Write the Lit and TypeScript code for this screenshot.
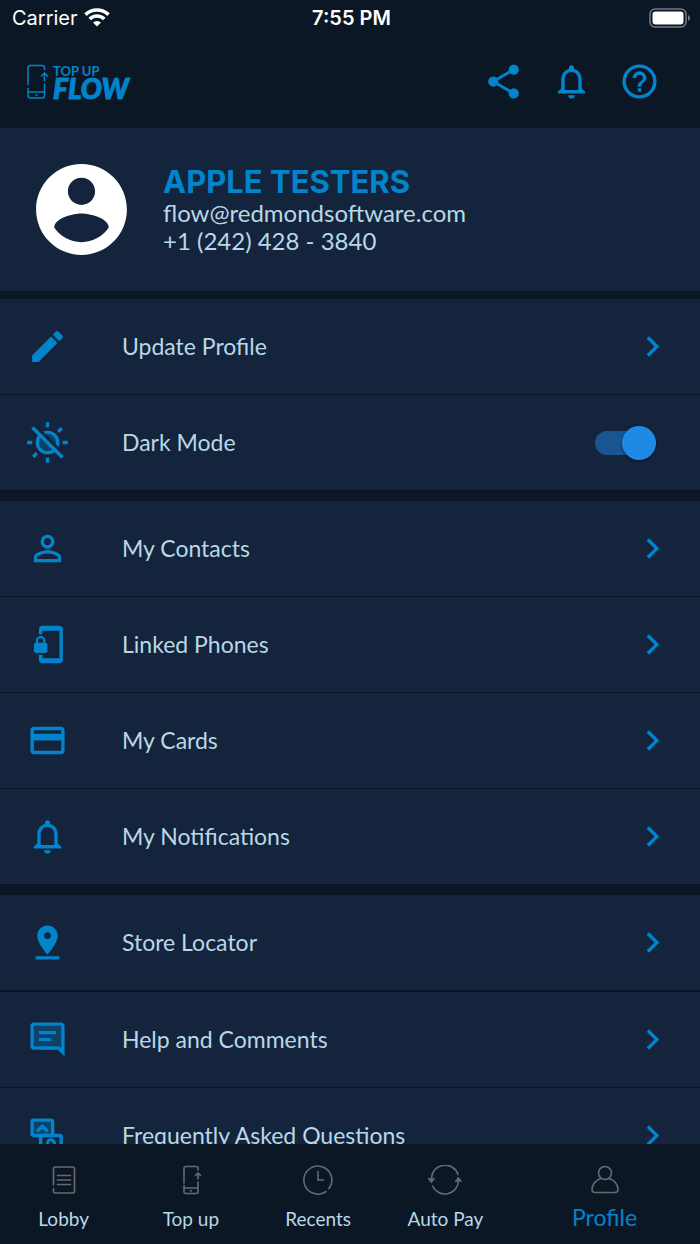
import { LitElement, html, css, svg } from "lit";
import { customElement, property, state } from "lit/decorators.js";

const icons = {
  share: svg`<g fill="currentColor"><circle cx="18" cy="5" r="3"/><circle cx="6" cy="12" r="3"/><circle cx="18" cy="19" r="3"/></g><path d="M18 5 6 12l12 7" fill="none" stroke="currentColor" stroke-width="1.7"/>`,
  bell: svg`<path fill="currentColor" d="M12 22c1.1 0 2-.9 2-2h-4c0 1.1.9 2 2 2zm6-6v-5c0-3.07-1.63-5.64-4.5-6.32V4c0-.83-.67-1.5-1.5-1.5s-1.5.67-1.5 1.5v.68C7.64 5.36 6 7.92 6 11v5l-2 2v1h16v-1l-2-2zm-2 1H8v-6c0-2.48 1.51-4.5 4-4.5s4 2.02 4 4.5v6z"/>`,
  help: svg`<path fill="currentColor" d="M11 18h2v-2h-2v2zm1-16C6.48 2 2 6.48 2 12s4.48 10 10 10 10-4.48 10-10S17.52 2 12 2zm0 18c-4.41 0-8-3.59-8-8s3.59-8 8-8 8 3.59 8 8-3.59 8-8 8zm0-14c-2.21 0-4 1.79-4 4h2c0-1.1.9-2 2-2s2 .9 2 2c0 2-3 1.75-3 5h2c0-2.25 3-2.5 3-5 0-2.21-1.79-4-4-4z"/>`,
  account: svg`<path fill="currentColor" d="M12 2C6.48 2 2 6.48 2 12s4.48 10 10 10 10-4.48 10-10S17.52 2 12 2zm0 3c1.66 0 3 1.34 3 3s-1.34 3-3 3-3-1.34-3-3 1.34-3 3-3zm0 14.2c-2.5 0-4.71-1.28-6-3.22.03-1.99 4-3.08 6-3.08 1.99 0 5.97 1.09 6 3.08-1.29 1.94-3.5 3.22-6 3.22z"/>`,
  edit: svg`<path fill="currentColor" d="M3 17.25V21h3.75L17.81 9.94l-3.75-3.75L3 17.25zM20.71 7.04c.39-.39.39-1.02 0-1.41l-2.34-2.34c-.39-.39-1.02-.39-1.41 0l-1.83 1.83 3.75 3.75 1.83-1.83z"/>`,
  sunOff: svg`<circle cx="12" cy="12" r="5" fill="currentColor" opacity=".3"/><circle cx="12" cy="12" r="6" fill="none" stroke="currentColor" stroke-width="1.9"/><path d="M12 .1v3M12 20.9v3M.1 12h3M20.9 12h3M18.3 5.7l2.1-2.1M3.6 20.4l2.1-2.1" fill="none" stroke="currentColor" stroke-width="2"/><path d="M5.2 2.6 21.4 18.8" stroke="#14243c" stroke-width="1.8"/><path d="M3.2 3.2 20.8 20.8" stroke="currentColor" stroke-width="2"/>`,
  person: svg`<path fill="currentColor" d="M12 5.9c1.16 0 2.1.94 2.1 2.1s-.94 2.1-2.1 2.1S9.9 9.16 9.9 8s.94-2.1 2.1-2.1m0 9c2.97 0 6.1 1.46 6.1 2.1v1.1H5.9V17c0-.64 3.13-2.1 6.1-2.1M12 4C9.79 4 8 5.79 8 8s1.79 4 4 4 4-1.79 4-4-1.79-4-4-4zm0 9c-2.67 0-8 1.34-8 4v3h16v-3c0-2.66-5.33-4-8-4z"/>`,
  phoneLock: svg`<path fill="currentColor" d="M19 1H9c-1.1 0-2 .9-2 2v3h2V4h10v16H9v-2H7v3c0 1.1.9 2 2 2h10c1.1 0 2-.9 2-2V3c0-1.1-.9-2-2-2zm-8.2 10V9.5C10.8 8.1 9.4 7 8 7S5.2 8.1 5.2 9.5V11c-.6 0-1.2.6-1.2 1.2v3.5c0 .7.6 1.3 1.2 1.3h5.5c.7 0 1.3-.6 1.3-1.2v-3.5c0-.7-.6-1.3-1.2-1.3zm-1.3 0h-3V9.5c0-.8.7-1.3 1.5-1.3s1.5.5 1.5 1.3V11z"/>`,
  card: svg`<path fill="currentColor" d="M20 4H4c-1.11 0-1.99.89-1.99 2L2 18c0 1.11.89 2 2 2h16c1.11 0 2-.89 2-2V6c0-1.11-.89-2-2-2zm0 14H4v-6h16v6zm0-10H4V6h16v2z"/>`,
  pin: svg`<path fill="currentColor" d="M18 8c0-3.31-2.69-6-6-6S6 4.69 6 8c0 4.5 6 11 6 11s6-6.5 6-11zm-8 0c0-1.1.9-2 2-2s2 .9 2 2-.89 2-2 2c-1.1 0-2-.9-2-2zM5 20v2h14v-2H5z"/>`,
  comment: svg`<path fill="currentColor" opacity=".3" d="M4 4h16v13.17L18.83 16H4z"/><path fill="currentColor" d="M20 17.17L18.83 16H4V4h16v13.17zM20 2H4c-1.1 0-2 .9-2 2v12c0 1.1.9 2 2 2h14l4 4V4c0-1.1-.9-2-2-2z"/><path d="M7 8h10M7 12h7" stroke="currentColor" stroke-width="1.9"/>`,
  faq: svg`<rect x="3" y="3" width="12" height="9" rx="1" fill="currentColor" fill-opacity=".3" stroke="currentColor" stroke-width="2"/><path d="M5.8 9.7 9 6.6l3.2 3.1" fill="none" stroke="currentColor" stroke-width="2"/><rect x="8" y="12" width="12" height="9" rx="1" fill="#14243c" stroke="currentColor" stroke-width="2"/><circle cx="14" cy="16.5" r="2" fill="none" stroke="currentColor" stroke-width="1.8"/>`,
  chevron: svg`<path fill="currentColor" d="M10 6L8.59 7.41 13.17 12l-4.58 4.59L10 18l6-6z"/>`,
};

// Thin-line glyphs of the tab bar, on a 36 x 30 grid.
const tabIcons = {
  lobby: svg`<path d="M7.500 20V3.500Q7.500 2 9 2h18q1.500 0 1.500 1.500v23q0 1.500-1.500 1.500H9q-1.500 0-1.500-1.500V23.500M11.500 10.500h13M11.500 15h13M11.500 19.500h13"/>`,
  topup: svg`<path d="M25 5V3q0-1.500-1.500-1.500h-11q-1.500 0-1.500 1.500v15M25 17v10q0 1.500-1.500 1.500h-11Q11 28.500 11 27v-6.500M11 23h14M25 14V8M22.500 10.500 25 8l2.500 2.500M17.500 25.800h1"/>`,
  recents: svg`<path d="M26 26.500A14 14 0 1 1 29 23.600M18 6.500V15h5.500"/>`,
  autopay: svg`<path d="M4.500 14.500A13.600 13.600 0 0 1 31 9.500M31.500 15.500A13.600 13.600 0 0 1 5.500 21"/><path fill="currentColor" stroke-width="1" d="M1.500 13.500q3 1.500 6 0l-3 4zM28.500 16.500q3-1.500 6 0l-3-4z"/>`,
  profile: svg`<circle cx="18" cy="8" r="6.500"/><path d="M14 13.500C8.500 15 5 19.500 5 24.500q0 3 3 3h20q3 0 3-3c0-5-3.500-9.500-9-11"/>`,
};

interface Item {
  label: string;
  icon: keyof typeof icons;
  toggle?: boolean;
}

const groups: Item[][] = [
  [
    { label: "Update Profile", icon: "edit" },
    { label: "Dark Mode", icon: "sunOff", toggle: true },
  ],
  [
    { label: "My Contacts", icon: "person" },
    { label: "Linked Phones", icon: "phoneLock" },
    { label: "My Cards", icon: "card" },
    { label: "My Notifications", icon: "bell" },
  ],
  [{ label: "Store Locator", icon: "pin" }],
  [
    { label: "Help and Comments", icon: "comment" },
    { label: "Frequently Asked Questions", icon: "faq" },
  ],
];

const tabs: { label: string; icon: keyof typeof tabIcons }[] = [
  { label: "Lobby", icon: "lobby" },
  { label: "Top up", icon: "topup" },
  { label: "Recents", icon: "recents" },
  { label: "Auto Pay", icon: "autopay" },
  { label: "Profile", icon: "profile" },
];

@customElement("app-icon")
export class AppIcon extends LitElement {
  @property() name: keyof typeof icons = "chevron";
  static styles = css`
    :host { display: block; width: 41px; height: 41px; flex: none; color: #0084cc; }
    .glyph { display: block; width: 100%; height: 100%; }
  `;
  render() {
    return html`<svg class="glyph" viewBox="0 0 24 24" aria-hidden="true">${icons[this.name]}</svg>`;
  }
}

@customElement("app-root")
export class AppRoot extends LitElement {
  @state() dark = true;

  static styles = css`
    :host {
      display: flex;
      flex-direction: column;
      height: 100vh;
      background: #0c1726;
      color: #b9d8e6;
      font-family: Lato, "Open Sans", sans-serif;
    }
    * { box-sizing: border-box; }
    a { color: inherit; text-decoration: none; }
    button { border: 0; padding: 0; background: none; cursor: pointer; }
    .status {
      display: grid;
      grid-template-columns: 1fr auto 1fr;
      align-items: center;
      height: 35px;
      padding: 0 9px 0 12px;
      color: #fff;
      font: 400 20px/24px Inter, sans-serif;
    }
    .carrier { display: flex; align-items: center; gap: 6px; }
    .time { font-weight: 600; }
    .wifi { width: 26px; height: 19px; }
    .battery { width: 42px; height: 20px; justify-self: end; }
    .header {
      display: flex;
      justify-content: space-between;
      align-items: center;
      height: 93px;
      padding: 0 40px 0 26px;
    }
    .logo { display: flex; align-items: center; gap: 4px; color: #0084cc; }
    .phone { width: 23px; height: 36px; }
    .brand { display: grid; }
    .top { font-size: 13px; line-height: 12px; font-weight: 700; }
    .flow {
      font-size: 28px;
      line-height: 22px;
      font-weight: 900;
      font-style: italic;
      -webkit-text-stroke: 1px currentColor;
    }
    .actions { display: flex; gap: 27px; }
    .content { flex: 1; min-height: 0; overflow-y: auto; scrollbar-width: none; }
    .profile {
      display: flex;
      align-items: center;
      gap: 27px;
      height: 163px;
      padding: 0 27px;
      margin-bottom: 8px;
      background: #14243c;
    }
    .avatar { width: 109px; height: 109px; color: #fff; }
    .name { margin: 0; color: #0084cc; font: 700 31px/34px Inter, sans-serif; }
    .line { margin: 0; font-size: 24px; line-height: 28px; }
    .group { list-style: none; margin: 0 0 10px; padding: 0; }
    .group.tight { margin-bottom: 1px; }
    .row {
      display: flex;
      align-items: center;
      height: 96px;
      padding: 0 27px;
      gap: 54px;
      background: #14243c;
      border-bottom: 1px solid #0b1423;
      font-size: 23px;
      line-height: 28px;
    }
    .text { flex: 1; padding-bottom: 2px; }
    .switch {
      appearance: none;
      display: flex;
      align-items: center;
      justify-content: flex-start;
      width: 61px;
      height: 24px;
      margin: 0 17px 0 0;
      border-radius: 12px;
      background: #26364c;
      cursor: pointer;
    }
    .switch:checked { justify-content: flex-end; background: #1a5591; }
    .switch::before {
      content: "";
      width: 34px;
      height: 34px;
      border-radius: 50%;
      background: #1f8ae6;
      box-shadow: 0 1px 3px rgba(0, 0, 0, 0.5);
    }
    .tabs {
      display: grid;
      grid-template-columns: repeat(4, 2fr) 3fr;
      height: 100px;
      flex: none;
      background: #0c1726;
    }
    .tab {
      display: flex;
      flex-direction: column;
      align-items: center;
      padding-top: 21px;
      gap: 12px;
      font-size: 19px;
      line-height: 24px;
    }
    .tab.current { color: #0084cc; font-size: 23px; gap: 10px; }
    .tabicon {
      width: 36px;
      height: 30px;
      fill: none;
      stroke: #69696e;
      color: #69696e;
      stroke-width: 1.6;
      stroke-linecap: round;
    }
  `;

  private row(item: Item) {
    if (item.toggle) {
      return html`<li><label class="row">
        <app-icon name=${item.icon}></app-icon>
        <span class="text">${item.label}</span>
        <input class="switch" type="checkbox" role="switch" .checked=${this.dark}
          @change=${(e: Event) => (this.dark = (e.target as HTMLInputElement).checked)} />
      </label></li>`;
    }
    return html`<li><a class="row" href="#">
      <app-icon name=${item.icon}></app-icon>
      <span class="text">${item.label}</span>
      <app-icon name="chevron"></app-icon>
    </a></li>`;
  }

  render() {
    return html`
      <div class="status">
        <span class="carrier">Carrier
          <svg class="wifi" viewBox="0 0 26 19" aria-hidden="true">
            <g fill="none" stroke="#fff" stroke-width="3.6">
              <path d="M1.500 6.600a16.500 16.500 0 0 1 23 0"/>
              <path d="M5.700 11a10.400 10.400 0 0 1 14.600 0"/>
            </g>
            <path fill="#fff" d="M13 18.500 9 14.600a5.700 5.700 0 0 1 8 0z"/>
          </svg>
        </span>
        <span class="time">7:55 PM</span>
        <svg class="battery" viewBox="0 0 42 20" aria-hidden="true">
          <rect x="1" y="1" width="36" height="18" rx="5" fill="none" stroke="#747b85" stroke-width="1.5"/>
          <rect x="3.500" y="3.500" width="31" height="13" rx="3" fill="#fff"/>
          <path d="M39 7v6q2-1 2-3t-2-3z" fill="#747b85"/>
        </svg>
      </div>
      <header class="header">
        <a class="logo" href="#">
          <svg class="phone" viewBox="0 0 23 36" aria-hidden="true">
            <g fill="none" stroke="currentColor" stroke-width="1.5">
              <path d="M18.500 6V4q0-2.500-2.500-2.500H4.500Q2 1.500 2 4v17M2 24v7.500Q2 34 4.500 34H16q2.500 0 2.500-2.500V19.500M2 28h16.500M18.500 17V9M15 12.500 18.500 9l3.500 3.500M9.500 31h2"/>
            </g>
          </svg>
          <span class="brand"><span class="top">TOP UP</span><span class="flow">FLOW</span></span>
        </a>
        <div class="actions">
          <button aria-label="Share"><app-icon name="share"></app-icon></button>
          <button aria-label="Notifications"><app-icon name="bell"></app-icon></button>
          <button aria-label="Help"><app-icon name="help"></app-icon></button>
        </div>
      </header>
      <main class="content">
        <section class="profile">
          <app-icon class="avatar" name="account"></app-icon>
          <div>
            <h1 class="name">APPLE TESTERS</h1>
            <p class="line">flow@redmondsoftware.com</p>
            <p class="line">+1 (242) 428 - 3840</p>
          </div>
        </section>
        ${groups.map((g) => html`<ul class="group ${g.length === 1 ? "tight" : ""}">${g.map((i) => this.row(i))}</ul>`)}
      </main>
      <nav class="tabs">
        ${tabs.map((t) => html`<a class="tab ${t.label === "Profile" ? "current" : ""}" href="#">
          <svg class="tabicon" viewBox="0 0 36 30" aria-hidden="true">${tabIcons[t.icon]}</svg>
          <span>${t.label}</span>
        </a>`)}
      </nav>
    `;
  }
}
